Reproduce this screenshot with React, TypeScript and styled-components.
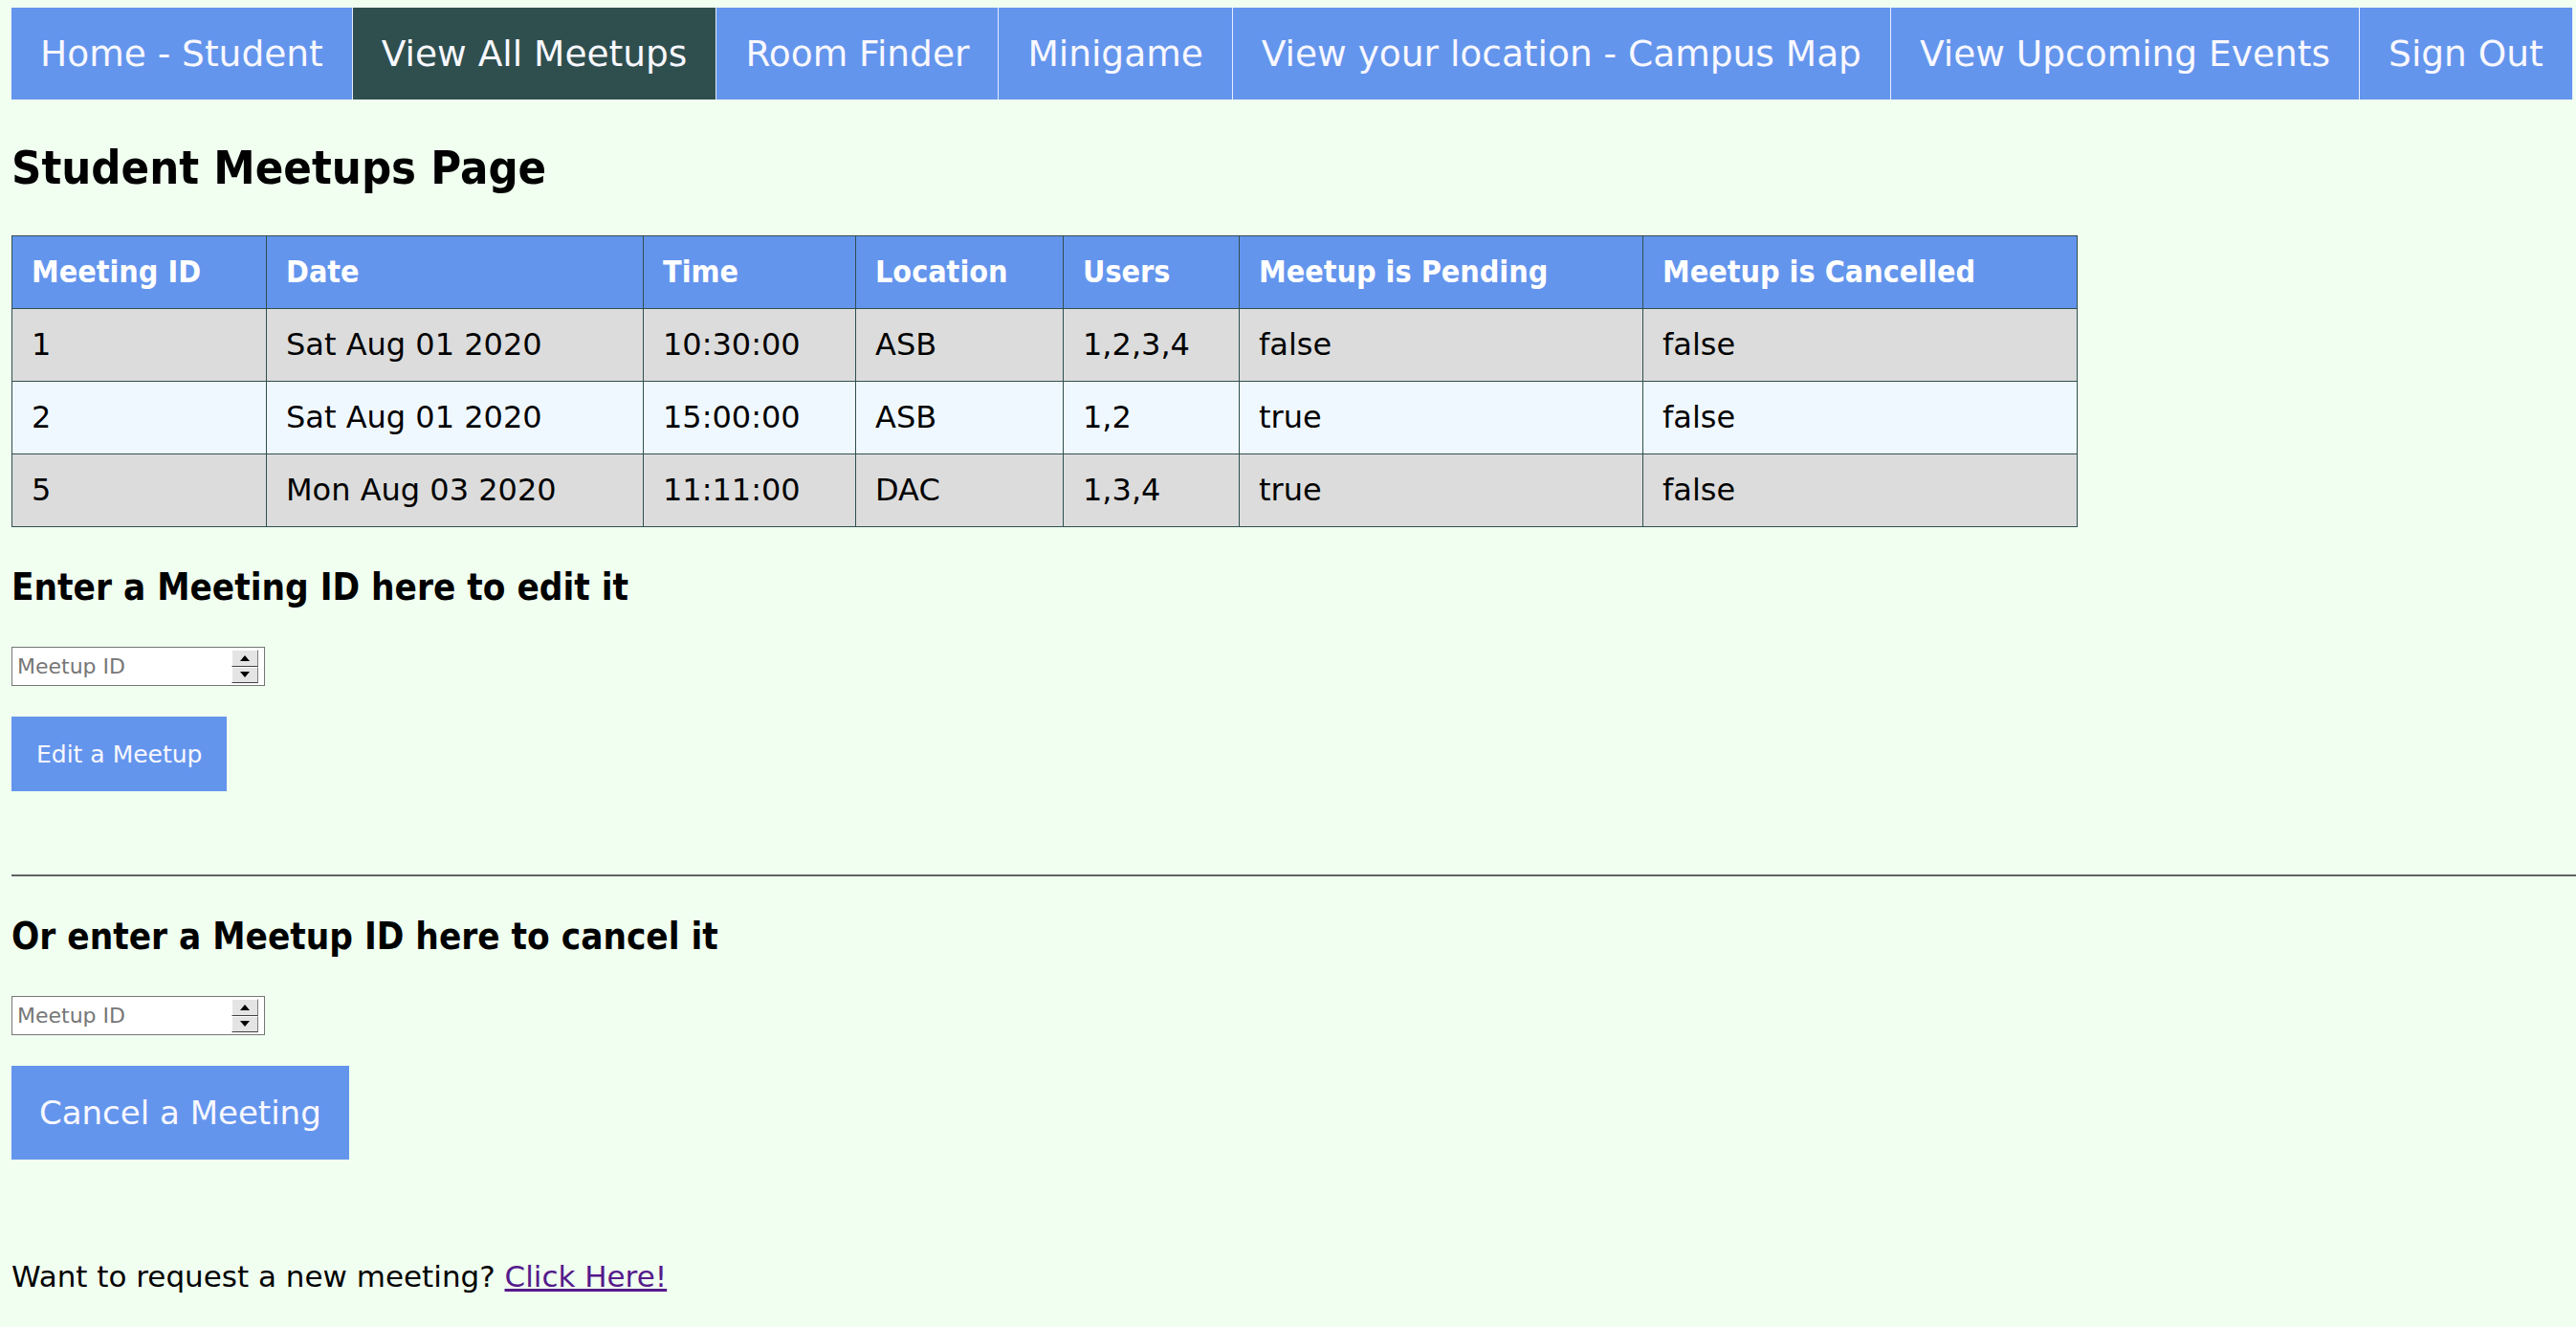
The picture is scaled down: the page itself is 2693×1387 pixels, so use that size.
import React from "react";
import styled, { createGlobalStyle } from "styled-components";

type Meetup = {
  id: number;
  date: string;
  time: string;
  location: string;
  users: string;
  pending: boolean;
  cancelled: boolean;
};

const navItems = [
  "Home - Student",
  "View All Meetups",
  "Room Finder",
  "Minigame",
  "View your location - Campus Map",
  "View Upcoming Events",
  "Sign Out",
];

const meetups: Meetup[] = [
  { id: 1, date: "Sat Aug 01 2020", time: "10:30:00", location: "ASB", users: "1,2,3,4", pending: false, cancelled: false },
  { id: 2, date: "Sat Aug 01 2020", time: "15:00:00", location: "ASB", users: "1,2", pending: true, cancelled: false },
  { id: 5, date: "Mon Aug 03 2020", time: "11:11:00", location: "DAC", users: "1,3,4", pending: true, cancelled: false },
];

const columns = [
  { label: "Meeting ID", width: 266 },
  { label: "Date", width: 394 },
  { label: "Time", width: 222 },
  { label: "Location", width: 217 },
  { label: "Users", width: 184 },
  { label: "Meetup is Pending", width: 422 },
  { label: "Meetup is Cancelled", width: 454 },
];

const GlobalStyle = createGlobalStyle`
  html, body {
    background: #f0fff0;
  }
  body {
    margin: 0;
    padding: 8px 0 8px 12px;
    font-family: "DejaVu Sans", Verdana, sans-serif;
    color: #000;
  }
`;

const NumberField: React.FC = () => {
  return (
    <FieldBox>
      <FieldInput type="text" placeholder="Meetup ID" />
      <Spinner>
        <SpinButton>
          <Triangle $up />
        </SpinButton>
        <SpinButton>
          <Triangle $up={false} />
        </SpinButton>
      </Spinner>
    </FieldBox>
  );
};

const App: React.FC = () => {
  return (
    <>
      <GlobalStyle />
      <NavBar>
        {navItems.map((item) => (
          <NavLink key={item} href="#" $active={item === "View All Meetups"}>
            {item}
          </NavLink>
        ))}
      </NavBar>

      <PageTitle>Student Meetups Page</PageTitle>

      <MeetupTable>
        <colgroup>
          {columns.map((c) => (
            <col key={c.label} style={{ width: c.width }} />
          ))}
        </colgroup>
        <thead>
          <tr>
            {columns.map((c) => (
              <HeadCell key={c.label}>{c.label}</HeadCell>
            ))}
          </tr>
        </thead>
        <tbody>
          {meetups.map((m) => (
            <Row key={m.id}>
              <Cell>{m.id}</Cell>
              <Cell>{m.date}</Cell>
              <Cell>{m.time}</Cell>
              <Cell>{m.location}</Cell>
              <Cell>{m.users}</Cell>
              <Cell>{String(m.pending)}</Cell>
              <Cell>{String(m.cancelled)}</Cell>
            </Row>
          ))}
        </tbody>
      </MeetupTable>

      <SectionTitle>Enter a Meeting ID here to edit it</SectionTitle>
      <NumberField />
      <ActionButton $large={false}>Edit a Meetup</ActionButton>

      <Divider />

      <SectionTitle>Or enter a Meetup ID here to cancel it</SectionTitle>
      <NumberField />
      <ActionButton $large>Cancel a Meeting</ActionButton>

      <Footer>
        Want to request a new meeting? <FooterLink href="#">Click Here!</FooterLink>
      </Footer>
    </>
  );
};

export default App;

const NavBar = styled.nav`
  display: flex;
  overflow: hidden;
  height: 96px;
`;

const NavLink = styled.a<{ $active: boolean }>`
  flex-shrink: 0;
  display: block;
  padding: 0 30px;
  line-height: 96px;
  font-size: 37.5px;
  color: #f8f8ff;
  text-decoration: none;
  white-space: nowrap;
  background-color: ${(p) => (p.$active ? "#2f4f4f" : "#6495ed")};
  border-right: 1px solid #e6ecff;
`;

const PageTitle = styled.h2`
  margin: 43px 0 43px;
  font-family: "DejaVu Sans Condensed", "DejaVu Sans", sans-serif;
  font-size: 48.5px;
  font-weight: 700;
  line-height: 56px;
`;

const MeetupTable = styled.table`
  width: 2159px;
  table-layout: fixed;
  border-collapse: collapse;
  font-size: 32px;
  line-height: 37px;
`;

const HeadCell = styled.th`
  padding: 19px 20px;
  text-align: left;
  font-family: "DejaVu Sans Condensed", "DejaVu Sans", sans-serif;
  font-weight: 700;
  color: #fff;
  background-color: #6495ed;
  border: 1px solid #2f4f4f;
`;

const Row = styled.tr`
  background-color: #dcdcdc;

  &:nth-child(even) {
    background-color: #f0f8ff;
  }
`;

const Cell = styled.td`
  padding: 19px 20px;
  border: 1px solid #2f4f4f;
  white-space: nowrap;
`;

const SectionTitle = styled.h3`
  margin: 41px 0 40px;
  font-family: "DejaVu Sans Condensed", "DejaVu Sans", sans-serif;
  font-size: 38.3px;
  font-weight: 700;
  line-height: 44px;
`;

const FieldBox = styled.div`
  display: flex;
  align-items: center;
  box-sizing: border-box;
  width: 265px;
  height: 41px;
  padding: 0 6px 0 5px;
  background: #fff;
  border: 1px solid #767676;
`;

const FieldInput = styled.input`
  flex: 1;
  min-width: 0;
  padding: 0;
  border: none;
  outline: none;
  background: transparent;
  font-family: "DejaVu Sans", sans-serif;
  font-size: 22px;
  color: #000;

  &::placeholder {
    color: #767676;
  }
`;

const Spinner = styled.div`
  display: flex;
  flex-direction: column;
  width: 28px;
  height: 35px;
`;

const SpinButton = styled.div`
  flex: 1;
  display: flex;
  align-items: center;
  justify-content: center;
  box-sizing: border-box;
  background: #e4e4e4;
  border-top: 1px solid #fff;
  border-left: 1px solid #fff;
  border-right: 1px solid #7a7a7a;
  border-bottom: 1px solid #404040;
`;

const Triangle = styled.span<{ $up: boolean }>`
  width: 0;
  height: 0;
  border-left: 5px solid transparent;
  border-right: 5px solid transparent;
  ${(p) => (p.$up ? "border-bottom: 6px solid #000;" : "border-top: 6px solid #000;")}
`;

const ActionButton = styled.button<{ $large: boolean }>`
  display: block;
  margin-top: 32px;
  height: ${(p) => (p.$large ? "98px" : "78px")};
  padding: ${(p) => (p.$large ? "0 29px" : "0 26px")};
  font-family: "DejaVu Sans", sans-serif;
  font-size: ${(p) => (p.$large ? "34px" : "25px")};
  color: #f8f8ff;
  background-color: #6495ed;
  border: none;
  cursor: pointer;
`;

const Divider = styled.hr`
  margin: 87px 0 0;
  height: 0;
  border: none;
  border-top: 2px solid #5f6360;
`;

const Footer = styled.p`
  margin: 104px 0 0;
  font-size: 31px;
  line-height: normal;
`;

const FooterLink = styled.a`
  color: #551a8b;
  text-decoration: underline;
`;
